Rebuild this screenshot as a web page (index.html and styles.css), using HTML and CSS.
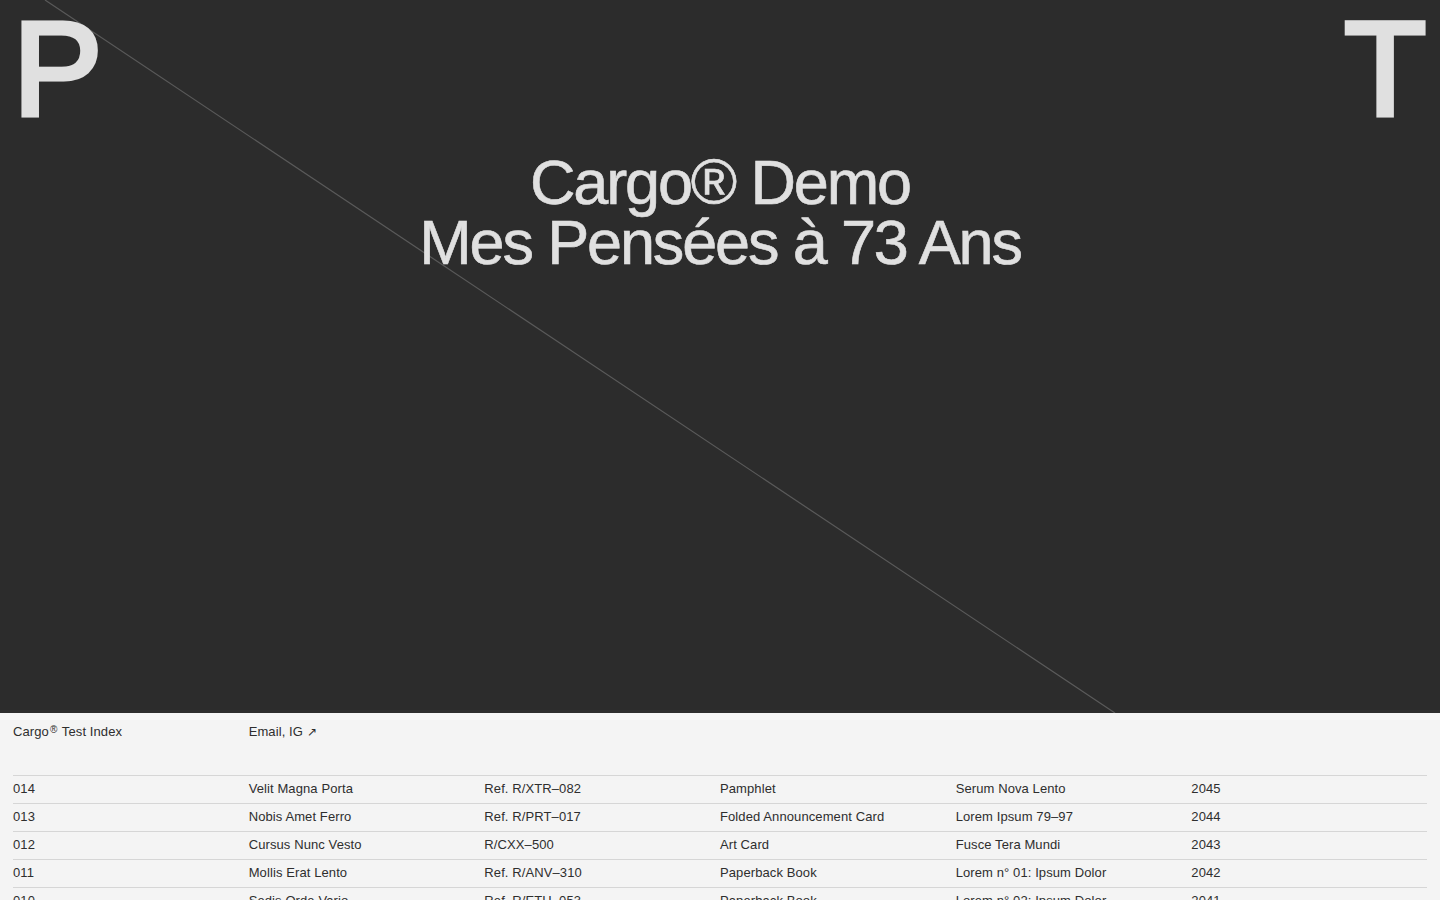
FILE: index.html
```
<!DOCTYPE html>
<html>
<head>
    <title>Cargo® Demo — Mes Pensées à 73 Ans</title>
    <link rel="stylesheet" href="styles.css">
</head>
<body>
    <header class="hero">
        <!-- thin diagonal rule across the cover -->
        <svg class="hero-rule" width="1440" height="713" viewBox="0 0 1440 713">
            <line x1="45" y1="0" x2="1115" y2="713" stroke="#5a5a5a" stroke-width="1.2"/>
        </svg>

        <div class="hero-letters">
            <span>P</span>
            <span>T</span>
        </div>

        <h1 class="hero-title">Cargo® Demo<br>Mes Pensées à 73 Ans</h1>
    </header>

    <main class="index">
        <div class="index-head">
            <span>Cargo<sup>®</sup> Test Index</span>
            <span>Email, IG <span class="arrow">↗</span></span>
        </div>

        <ul class="index-list">
            <li>
                <span>014</span>
                <span>Velit Magna Porta</span>
                <span>Ref. R/XTR–082</span>
                <span>Pamphlet</span>
                <span>Serum Nova Lento</span>
                <span>2045</span>
            </li>
            <li>
                <span>013</span>
                <span>Nobis Amet Ferro</span>
                <span>Ref. R/PRT–017</span>
                <span>Folded Announcement Card</span>
                <span>Lorem Ipsum 79–97</span>
                <span>2044</span>
            </li>
            <li>
                <span>012</span>
                <span>Cursus Nunc Vesto</span>
                <span>R/CXX–500</span>
                <span>Art Card</span>
                <span>Fusce Tera Mundi</span>
                <span>2043</span>
            </li>
            <li>
                <span>011</span>
                <span>Mollis Erat Lento</span>
                <span>Ref. R/ANV–310</span>
                <span>Paperback Book</span>
                <span>Lorem n° 01: Ipsum Dolor</span>
                <span>2042</span>
            </li>
            <li>
                <span>010</span>
                <span>Sedis Orde Vario</span>
                <span>Ref. R/ETH–053</span>
                <span>Paperback Book</span>
                <span>Lorem n° 02: Ipsum Dolor</span>
                <span>2041</span>
            </li>
            <li>
                <span>009</span>
                <span>Tempus Alba Curio</span>
                <span>Ref. R/LMN–228</span>
                <span>Poster</span>
                <span>Vita Brevis Arsa</span>
                <span>2040</span>
            </li>
        </ul>
    </main>
</body>
</html>
```

FILE: styles.css
```
* {
    box-sizing: border-box;
}

body {
    margin: 0;
    background-color: #f4f4f4;
    font-family: "Liberation Sans", Arial, sans-serif;
    color: #2e2e2e;
}

.hero {
    position: relative;
    height: 713px;
    background-color: #2c2c2c;
    color: #e0e0e0;
    overflow: hidden;
}

.hero-rule {
    position: absolute;
    top: 0;
    left: 0;
}

/* corner initials, stroked a little to get a medium weight */
.hero-letters {
    position: relative;
    display: flex;
    justify-content: space-between;
    padding: 2px 14px 0 13px;
    font-size: 134px;
    line-height: 1;
    -webkit-text-stroke: 5px #e0e0e0;
}

.hero-title {
    position: relative;
    margin: 16px 0 0;
    text-align: center;
    font-size: 63px;
    font-weight: normal;
    line-height: 60px;
    letter-spacing: -0.034em;
    -webkit-text-stroke: 0.6px #e0e0e0;
}

.index {
    padding: 10px 13px 40px;
}

.index-head {
    display: grid;
    grid-template-columns: repeat(6, 1fr);
    height: 52px;
    font-size: 13px;
    line-height: 18px;
    letter-spacing: 0.1px;
}

.index-head sup {
    font-size: 10px;
    vertical-align: 3px;
    line-height: 0;
    margin: 0 1px;
}

.arrow {
    font-size: 12px;
}

.index-list {
    list-style-type: none;
    margin: 0;
    padding: 0;
}

.index-list li {
    display: grid;
    grid-template-columns: repeat(6, 1fr);
    border-top: 1px solid #d6d6d6;
    padding: 4px 0 6px;
    font-size: 13px;
    line-height: 17px;
    letter-spacing: 0.1px;
}
```
